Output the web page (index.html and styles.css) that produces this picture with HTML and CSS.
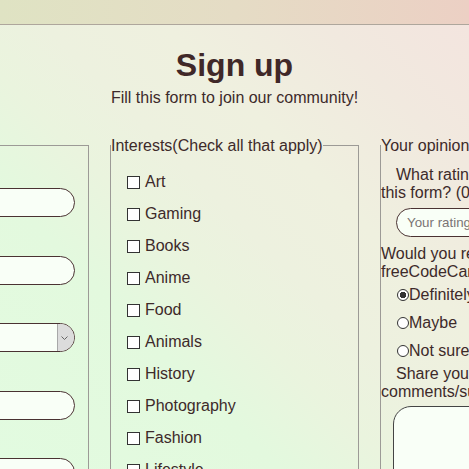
FILE: index.html
```html
<!DOCTYPE html>
<html lang="en">
<head>
<meta charset="utf-8">
<title>Sign up</title>
<link rel="stylesheet" href="styles.css">
</head>
<body>
<header class="topbar"></header>
<main class="page">
  <h1 class="title">Sign up</h1>
  <p class="subtitle">Fill this form to join our community!</p>
  <form class="survey">
    <fieldset class="panel personal">
      <legend class="panel-title">About you</legend>
      <div class="field-list">
        <div class="field">
          <label class="field-label" for="name">Name</label>
          <input class="pill-input" id="name" type="text">
        </div>
        <div class="field">
          <label class="field-label" for="email">Email</label>
          <input class="pill-input" id="email" type="email">
        </div>
        <div class="field">
          <label class="field-label" for="role">Role</label>
          <div class="select-wrap">
            <select class="pill-input pill-select" id="role">
              <option></option>
              <option>Student</option>
              <option>Other</option>
            </select>
            <span class="select-arrow"><svg width="7" height="4" viewBox="0 0 7 4"><path d="M0.5 0.5 L3.5 3.5 L6.5 0.5" fill="none" stroke="#666" stroke-width="1"/></svg></span>
          </div>
        </div>
        <div class="field">
          <label class="field-label" for="age">Age</label>
          <input class="pill-input" id="age" type="text">
        </div>
        <div class="field">
          <label class="field-label" for="city">City</label>
          <input class="pill-input" id="city" type="text">
        </div>
      </div>
    </fieldset>

    <fieldset class="panel interests">
      <legend class="panel-title">Interests(Check all that apply)</legend>
      <div class="check-list">
        <label class="check-row"><input class="check" type="checkbox">Art</label>
        <label class="check-row"><input class="check" type="checkbox">Gaming</label>
        <label class="check-row"><input class="check" type="checkbox">Books</label>
        <label class="check-row"><input class="check" type="checkbox">Anime</label>
        <label class="check-row"><input class="check" type="checkbox">Food</label>
        <label class="check-row"><input class="check" type="checkbox">Animals</label>
        <label class="check-row"><input class="check" type="checkbox">History</label>
        <label class="check-row"><input class="check" type="checkbox">Photography</label>
        <label class="check-row"><input class="check" type="checkbox">Fashion</label>
        <label class="check-row"><input class="check" type="checkbox">Lifestyle</label>
        <label class="check-row"><input class="check" type="checkbox">Music</label>
      </div>
    </fieldset>

    <fieldset class="panel opinion">
      <legend class="panel-title">Your opinion</legend>
      <div class="opinion-body">
        <label class="question indent" for="rating">What rating would you give this form? (0-10)</label>
        <input class="pill-input rating" id="rating" type="text" placeholder="Your rating">
        <p class="question recommend">Would you recommend freeCodeCamp to a friend?</p>
        <div class="radio-list">
          <label class="radio-row"><input class="radio" type="radio" name="rec" checked>Definitely</label>
          <label class="radio-row"><input class="radio" type="radio" name="rec">Maybe</label>
          <label class="radio-row"><input class="radio" type="radio" name="rec">Not sure</label>
        </div>
        <label class="question indent" for="comments">Share your comments/suggestions</label>
        <textarea class="comments" id="comments"></textarea>
      </div>
    </fieldset>
  </form>
</main>
</body>
</html>
```

FILE: styles.css
```css
* {
  box-sizing: border-box;
}

html {
  background: #e2fbe0;
}

body {
  margin: 0;
  min-height: 100vh;
  font-family: "Liberation Sans", Arial, sans-serif;
  font-size: 16px;
  color: #3d2a2a;
  background: linear-gradient(45deg, #e2fbe0 0%, #e3f9de 30%, #eaf4de 42%, #edf1df 52%, #eff0df 65%, #f1e9df 82%, #f4e4df 100%) fixed;
}

.topbar {
  height: 25px;
  background: linear-gradient(to right, #dfe3c3 0%, #e5dcc5 50%, #ecd0c4 100%);
  border-bottom: 1px solid #aea69c;
}

.page {
  overflow-x: clip;
  padding-bottom: 40px;
}

.title {
  margin: 22px 0 5px;
  font-size: 32px;
  font-weight: bold;
  text-align: center;
  color: #402828;
}

.subtitle {
  margin: 0;
  text-align: center;
}

.survey {
  display: flex;
  justify-content: center;
  gap: 21px;
  margin-top: 28px;
}

.panel {
  flex: none;
  width: 249px;
  margin: 0;
  padding: 0;
  border: 1px solid #9c9a96;
  min-height: 420px;
}

.panel-title {
  padding: 2px 0 0;
}

/* left column */
.field-list {
  display: flex;
  flex-direction: column;
  gap: 16.6px;
  padding: 11px 13px 0 12px;
}

.field-label {
  display: block;
  margin-bottom: 4px;
}

.pill-input {
  display: block;
  width: 100%;
  height: 29px;
  padding: 0 10px;
  border: 1px solid #4a3232;
  border-radius: 15px;
  background: #f9fff7;
  font-family: inherit;
  font-size: 13.33px;
  color: #3d2a2a;
  outline: none;
}

.select-wrap {
  position: relative;
}

.pill-select {
  appearance: none;
  -webkit-appearance: none;
}

.select-arrow {
  position: absolute;
  top: 1px;
  right: 1px;
  bottom: 1px;
  width: 17px;
  display: flex;
  align-items: center;
  justify-content: center;
  padding-right: 3px;
  background: #dcdcdc;
  border-left: 1px solid #a8a8a8;
  border-radius: 0 14px 14px 0;
}

/* middle column */
.check-list {
  display: flex;
  flex-direction: column;
  padding: 11px 0 0 16px;
}

.check-row {
  display: flex;
  align-items: center;
  height: 32px;
}

.check {
  appearance: none;
  -webkit-appearance: none;
  width: 13px;
  height: 13px;
  margin: 0 5px 0 0;
  border: 1px solid #333;
  background: #fff;
}

/* right column */
.opinion-body {
  display: flex;
  flex-direction: column;
  align-items: flex-start;
  padding: 11px 25px 0 0;
}

.question {
  display: block;
  margin: 0;
}

.indent {
  text-indent: 15px;
}

.rating {
  width: 200px;
  margin: 5.5px 0 0 15px;
}

.rating::placeholder {
  color: #7a7474;
}

.recommend {
  margin-top: 8.3px;
}

.radio-list {
  display: flex;
  flex-direction: column;
}

.radio-row {
  display: flex;
  align-items: center;
  height: 28px;
}

.radio {
  appearance: none;
  -webkit-appearance: none;
  width: 12px;
  height: 12px;
  margin: 0 0 0 16px;
  border: 1px solid #333;
  border-radius: 50%;
  background: #fff;
}

.radio:checked {
  background: radial-gradient(circle, #333 0 3px, #fff 3.5px);
}

.comments {
  width: 200px;
  height: 110px;
  margin: 5px 0 0 12px;
  border: 1px solid #444;
  border-radius: 18px;
  background: #f9fff7;
  resize: none;
}
```
